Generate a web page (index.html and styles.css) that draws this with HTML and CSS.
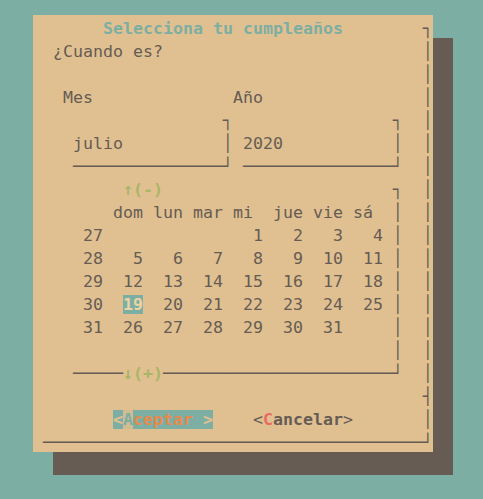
FILE: index.html
```html
<!DOCTYPE html>
<html lang="es">
<head>
<meta charset="utf-8">
<title>Selecciona tu cumpleaños</title>
<link rel="stylesheet" href="styles.css">
</head>
<body>
<div class="screen">
  <div class="dialog">
    <div class="row">       <span class="title">Selecciona tu cumpleaños</span>        ┐</div>
    <div class="row">  ¿Cuando es?                          │</div>
    <div class="row">                                       │</div>
    <div class="row">   Mes              Año                │</div>
    <div class="row">                   ┐                ┐  │</div>
    <div class="row">    julio          │ 2020           │  │</div>
    <div class="row">    ───────────────┘ ───────────────┘  │</div>
    <div class="row">         <span class="nav">↑(-)</span>                       ┐  │</div>
    <div class="row">        dom lun mar mi  jue vie sá  │  │</div>
    <div class="row">     27               1   2   3   4 │  │</div>
    <div class="row">     28   5   6   7   8   9  10  11 │  │</div>
    <div class="row">     29  12  13  14  15  16  17  18 │  │</div>
    <div class="row">     30  <span class="today">19</span>  20  21  22  23  24  25 │  │</div>
    <div class="row">     31  26  27  28  29  30  31     │  │</div>
    <div class="row">                                    │  │</div>
    <div class="row">    ─────<span class="nav">↓(+)</span>───────────────────────┘  │</div>
    <div class="row">                                       ┤</div>
    <div class="row">        <span class="btn btn-on"><span class="btn-edge">&lt;</span><span class="btn-hot">A</span><span class="btn-label">ceptar</span><span class="btn-edge"> &gt;</span></span>    <span class="btn"><span class="btn-edge">&lt;</span><span class="btn-key">C</span><span class="btn-text">ancelar</span><span class="btn-edge">&gt;</span></span>       │</div>
    <div class="row"> ──────────────────────────────────────┘</div>
  </div>
</div>
</body>
</html>
```
FILE: styles.css
```css
html, body {
  margin: 0;
  padding: 0;
  background: #7daea3;
}

.screen {
  width: 483px;
  height: 499px;
  overflow: hidden;
  padding: 15px 0 0 33px;
  box-sizing: border-box;
}

.dialog {
  width: 400px;
  height: 437px;
  padding-top: 2px;
  box-sizing: border-box;
  background: #e0c090;
  box-shadow: 20px 23px 0 #665c54;
  color: #665c54;
  font-family: "DejaVu Sans Mono", monospace;
  font-size: 16.61px;
  line-height: 23px;
}

.row {
  height: 23px;
  white-space: pre;
}

.title {
  color: #7daea3;
  font-weight: bold;
}

.nav {
  color: #a9b665;
  font-weight: bold;
}

.today {
  background: #7daea3;
  color: #ecd3a3;
  font-weight: bold;
}

.btn-on {
  font-weight: bold;
}

.btn-on .btn-edge {
  background: #7daea3;
  color: #e0c090;
}

.btn-on .btn-hot {
  background: #d2bc93;
  color: #7daea3;
}

.btn-on .btn-label {
  background: #7daea3;
  color: #e78a4e;
}

.btn-key {
  color: #ea6962;
  font-weight: bold;
}

.btn-text {
  font-weight: bold;
}
```
